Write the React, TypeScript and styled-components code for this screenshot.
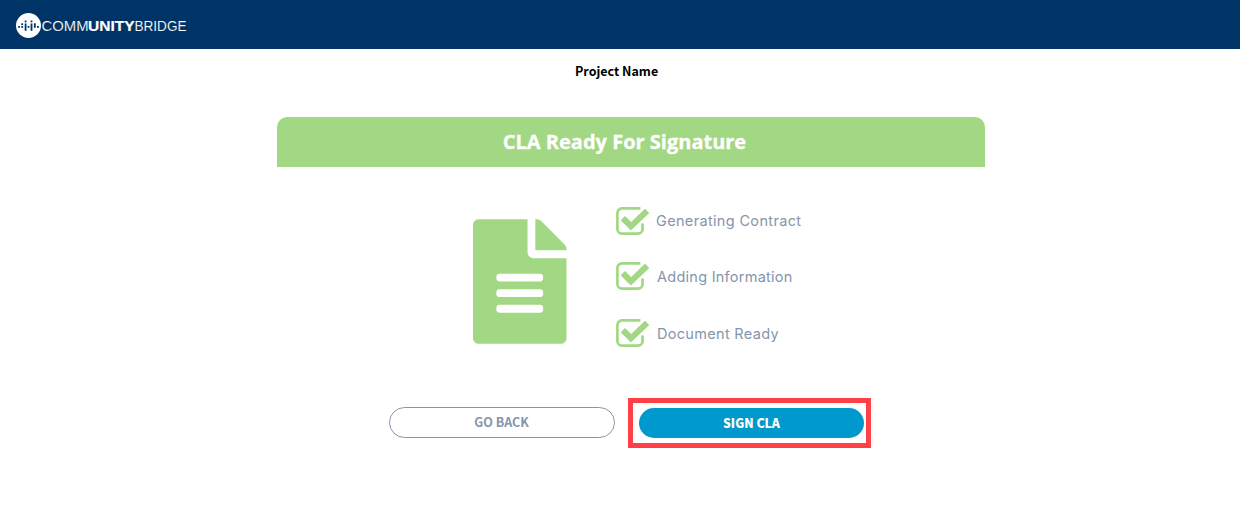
import React from 'react';
import styled, { createGlobalStyle } from 'styled-components';
import { FaFileAlt } from 'react-icons/fa';

const GREEN = '#a2d883';
const SLATE = '#8595ab';

const GlobalStyle = createGlobalStyle`
  * { box-sizing: border-box; }
  body { margin: 0; background: #fff; }
`;

const Page = styled.div`
  display: flex;
  flex-direction: column;
  width: 1240px;
  height: 516px;
  overflow: hidden;
  background: #fff;
  font-family: 'Noto Sans CJK SC', 'Open Sans', sans-serif;
`;

const Header = styled.header`
  display: flex;
  align-items: center;
  height: 49px;
  padding: 2px 0 0 16px;
  background: #003466;
`;

const LogoMark = styled.svg`
  display: block;
  width: 25px;
  height: 25px;
`;

const Wordmark = styled.svg`
  display: block;
  width: 170px;
  height: 25px;
  overflow: visible;
  fill: #fff;
  font-family: 'Liberation Sans', sans-serif;
`;

const ProjectName = styled.h1`
  margin: 11px 0 0 575px;
  font-size: 12.5px;
  line-height: 22px;
  font-weight: 700;
  color: #000;
`;

const Banner = styled.div`
  width: 708px;
  height: 50px;
  margin: 35px 0 0 277px;
  padding-right: 13px;
  border-radius: 10px 10px 0 0;
  background: ${GREEN};
  color: #fff;
  font: 700 20px/50px 'Open Sans', sans-serif;
  -webkit-text-stroke: 0.3px #fff;
  text-align: center;
`;

const Status = styled.section`
  display: flex;
  margin: 40px 0 0 473px;
  height: 141px;
`;

const FileIcon = styled(FaFileAlt)`
  width: 93.5px;
  height: 125px;
  margin: 12px 49.5px 0 0;
  color: ${GREEN};
`;

const Steps = styled.ul`
  display: flex;
  flex-direction: column;
  margin: 0;
  padding: 0;
  list-style: none;
`;

const Step = styled.li<{ $gap: number }>`
  display: flex;
  align-items: flex-start;
  height: 28px;
  margin-bottom: ${(p) => p.$gap}px;
`;

const CheckIcon = styled.svg`
  width: 34px;
  height: 28px;
  margin-right: 6px;
`;

const StepLabel = styled.span<{ $tracking: number; $indent: number; $drop: number }>`
  margin: ${(p) => p.$drop}px 0 0 ${(p) => p.$indent}px;
  font: 400 14.5px/28px 'Inter', sans-serif;
  letter-spacing: ${(p) => p.$tracking}px;
  color: ${SLATE};
  white-space: nowrap;
`;

const Actions = styled.div`
  display: flex;
  margin: 50px 0 0 389px;
`;

const Button = styled.button<{ $primary?: boolean }>`
  display: block;
  width: ${(p) => (p.$primary ? 225 : 226)}px;
  height: ${(p) => (p.$primary ? 30 : 31)}px;
  padding: ${(p) => (p.$primary ? '0' : '0 1px 1px 0')};
  border: ${(p) => (p.$primary ? '0' : `1px solid ${SLATE}`)};
  border-radius: 16px;
  background: ${(p) => (p.$primary ? '#0099cd' : '#fff')};
  color: ${(p) => (p.$primary ? '#fff' : SLATE)};
  font-family: 'Noto Sans CJK SC', sans-serif;
  font-weight: ${(p) => (p.$primary ? 900 : 700)};
  font-size: ${(p) => (p.$primary ? 12.3 : 12.5)}px;
  line-height: 28px;
`;

const Highlight = styled.div`
  width: 243px;
  height: 50px;
  margin-left: 13px;
  padding: 5px 0 0 6px;
  border: 5px solid #ff4145;
`;

const BackSlot = styled.div`
  padding-top: 9px;
`;

const Check = () => (
  <CheckIcon viewBox="0 0 34 28">
    <path
      d="M24.4 1.4H6A4.6 4.6 0 0 0 1.4 6v16A4.6 4.6 0 0 0 6 26.6h16a4.6 4.6 0 0 0 4.6-4.6v-5.6"
      fill="none"
      stroke={GREEN}
      strokeWidth="2.7"
    />
    <path
      d="M15.4 23.1q-.5.4-1 0L5.2 14q-.6-.6 0-1.2l3.2-3.2q.6-.6 1.2 0l5.6 5.3L28.3 2.2q.7-.6 1.3 0l3.2 3.2q.6.6 0 1.2z"
      fill={GREEN}
    />
  </CheckIcon>
);

const steps = [
  { label: 'Generating Contract', tracking: 0.34, indent: 0, drop: 0, gap: 27 },
  { label: 'Adding Information', tracking: 0.26, indent: 1, drop: 1, gap: 29 },
  { label: 'Document Ready', tracking: 0.31, indent: 1, drop: 1, gap: 0 },
];

export default function App() {
  return (
    <Page>
      <GlobalStyle />
      <Header>
        <LogoMark viewBox="0 0 25 25">
          <circle cx="12.5" cy="12.5" r="12.5" fill="#fff" />
          <g fill="#003466">
            <rect x="2.2" y="13" width="1.8" height="1.8" />
            <rect x="5.3" y="13" width="1.8" height="1.8" />
            <rect x="5.3" y="10.3" width="1.8" height="1.8" />
            <rect x="8.7" y="7.5" width="1.8" height="1.8" />
            <rect x="8.7" y="10.5" width="1.8" height="7.3" />
            <rect x="11.6" y="13" width="1.8" height="1.8" />
            <rect x="14.6" y="7.5" width="1.8" height="1.8" />
            <rect x="14.6" y="10.5" width="1.8" height="7.3" />
            <rect x="17.9" y="10.3" width="1.8" height="4.5" />
            <rect x="21" y="13" width="1.8" height="1.8" />
          </g>
        </LogoMark>
        <Wordmark viewBox="0 0 170 25">
          <text x="0.5" y="18" fontSize="15.5" textLength="47" lengthAdjust="spacingAndGlyphs" stroke="#003466" strokeWidth="0.15">COMM</text>
          <text x="47" y="18" fontSize="15.5" fontWeight="700" textLength="46.5" lengthAdjust="spacingAndGlyphs" stroke="#fff" strokeWidth="0.2">UNITY</text>
          <text x="93.5" y="18" fontSize="15.5" textLength="52" lengthAdjust="spacingAndGlyphs" stroke="#003466" strokeWidth="0.15">BRIDGE</text>
        </Wordmark>
      </Header>
      <ProjectName>Project Name</ProjectName>
      <Banner>CLA Ready For Signature</Banner>
      <Status>
        <FileIcon />
        <Steps>
          {steps.map((s) => (
            <Step key={s.label} $gap={s.gap}>
              <Check />
              <StepLabel $tracking={s.tracking} $indent={s.indent} $drop={s.drop}>{s.label}</StepLabel>
            </Step>
          ))}
        </Steps>
      </Status>
      <Actions>
        <BackSlot>
          <Button>GO BACK</Button>
        </BackSlot>
        <Highlight>
          <Button $primary>SIGN CLA</Button>
        </Highlight>
      </Actions>
    </Page>
  );
}
